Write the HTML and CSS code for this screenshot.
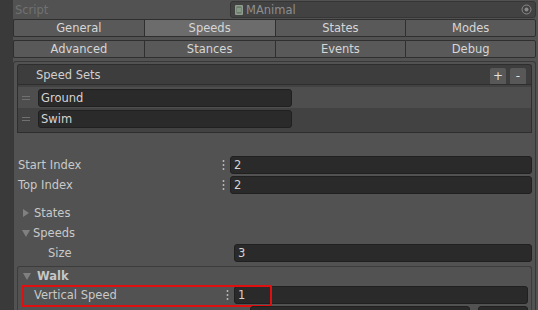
FILE: index.html
```html
<!DOCTYPE html>
<html>
<head>
<meta charset="utf-8">
<link rel="stylesheet" href="styles.css">
</head>
<body>
<div class="gutter"></div>
<div class="main">
  <div class="script-row">
    <span class="script-label">Script</span>
    <div class="objfield">
      <svg class="scripticon" width="8" height="10" viewBox="0 0 8 10"><rect x="0" y="0" width="8" height="10" rx="1" fill="#8f9c8f"/><rect x="1.5" y="1.5" width="5" height="7" fill="#5d6f5d"/><path d="M3 2.5v5M5 2.5v5M2 4h4M2 6h4" stroke="#9fb09f" stroke-width="0.8"/></svg>
      <span class="objname">MAnimal</span>
      <svg class="target" width="11" height="11" viewBox="0 0 11 11"><circle cx="5.5" cy="5.5" r="4.5" fill="none" stroke="#8a8a8a" stroke-width="1"/><circle cx="5.5" cy="5.5" r="2" fill="#8a8a8a"/></svg>
    </div>
  </div>
  <div class="tabs">
    <div class="tab">General</div>
    <div class="tab selected">Speeds</div>
    <div class="tab">States</div>
    <div class="tab">Modes</div>
  </div>
  <div class="tabs second">
    <div class="tab">Advanced</div>
    <div class="tab">Stances</div>
    <div class="tab">Events</div>
    <div class="tab">Debug</div>
  </div>
  <div class="box">
    <div class="list-header">
      <span class="list-title">Speed Sets</span>
      <div class="list-btns">
        <div class="lbtn">+</div>
        <div class="lbtn">-</div>
      </div>
    </div>
    <div class="list-body">
      <div class="list-item active">
        <span class="handle"></span>
        <div class="field name">Ground</div>
      </div>
      <div class="list-item">
        <span class="handle"></span>
        <div class="field name">Swim</div>
      </div>
    </div>

    <div class="prop first">
      <span class="plabel">Start Index</span>
      <span class="dots"></span>
      <div class="field wide">2</div>
    </div>
    <div class="prop">
      <span class="plabel">Top Index</span>
      <span class="dots"></span>
      <div class="field wide">2</div>
    </div>

    <div class="fold states"><span class="tri right"></span><span>States</span></div>
    <div class="fold"><span class="tri down"></span><span>Speeds</span></div>
    <div class="prop size">
      <span class="plabel">Size</span>
      <div class="field wide">3</div>
    </div>

    <div class="walk">
      <div class="walk-head"><span class="tri down"></span><span class="bold">Walk</span></div>
      <div class="prop vs">
        <span class="plabel">Vertical Speed</span>
        <span class="dots"></span>
        <div class="field wide">1</div>
        <div class="highlight"></div>
      </div>
      <div class="prop vs next">
        <span class="plabel"></span>
        <span class="dots"></span>
        <div class="field part"></div>
        <span class="dots"></span>
        <div class="field small"></div>
      </div>
    </div>
  </div>
</div>
</body>
</html>
```

FILE: styles.css
```css
* { box-sizing: border-box; }
html, body { margin: 0; padding: 0; }
body {
  width: 538px;
  height: 310px;
  overflow: hidden;
  background: #525252;
  font-family: "DejaVu Sans", sans-serif;
  font-size: 11.5px;
  color: #c9c9c9;
  display: flex;
}
.gutter {
  width: 13px;
  flex: none;
  background: #3a3a3a;
}
.main {
  width: 523px;
  flex: none;
}
.script-row {
  height: 19px;
  display: flex;
  align-items: center;
}
.script-label {
  padding-left: 2px;
  color: #717171;
}
.objfield {
  margin-left: auto;
  width: 306px;
  height: 17px;
  align-self: flex-start;
  margin-top: 1px;
  background: #424242;
  border: 1px solid #363636;
  border-radius: 3px;
  display: flex;
  align-items: center;
  padding-left: 4px;
  padding-right: 3px;
}
.scripticon { flex: none; }
.objname {
  margin-left: 3px;
  color: #8e8e8e;
}
.target { margin-left: auto; }
.tabs {
  display: grid;
  grid-template-columns: repeat(4, 1fr);
  height: 18px;
}
.tabs.second { margin-top: 3px; }
.tab {
  background: #595959;
  border: 1px solid #2f2f2f;
  border-right: none;
  color: #d6d6d6;
  display: flex;
  align-items: center;
  justify-content: center;
}
.tab:first-child { border-radius: 2px 0 0 2px; }
.tab:last-child { border-right: 1px solid #2f2f2f; border-radius: 0 2px 2px 0; }
.tab.selected { background: #6c6c6c; }
.box {
  margin-top: 3px;
  border: 1px solid #383838;
  border-bottom: none;
  border-radius: 3px 3px 0 0;
  padding: 2px 3px 0 3px;
  height: 249px;
  overflow: hidden;
}
.list-header {
  height: 20px;
  background: #3d3d3d;
  border: 1px solid #2e2e2e;
  border-bottom: none;
  border-radius: 3px 3px 0 0;
  display: flex;
  align-items: center;
  padding-left: 18px;
}
.list-title { color: #cfcfcf; }
.list-btns {
  margin-left: auto;
  display: flex;
  gap: 4px;
  align-self: flex-end;
  margin-right: 5px;
}
.lbtn {
  width: 16px;
  height: 16px;
  background: #585858;
  border-radius: 2px 2px 0 0;
  color: #e2e2e2;
  display: flex;
  align-items: center;
  justify-content: center;
  font-size: 12px;
}
.list-body {
  height: 49px;
  background: #424242;
  border: 1px solid #2e2e2e;
  padding-top: 2px;
}
.list-item {
  height: 21px;
  display: flex;
  align-items: center;
}
.list-item.active { background: #4e4e4e; }
.handle {
  width: 8px;
  height: 4px;
  margin-left: 4px;
  margin-right: 8px;
  border-top: 1px solid #707070;
  border-bottom: 1px solid #707070;
}
.field {
  height: 18px;
  background: #2a2a2a;
  border: 1px solid #202020;
  border-radius: 3px;
  color: #d4d4d4;
  display: flex;
  align-items: center;
  padding-left: 3px;
}
.field.name { width: 254px; padding-left: 2px; }
.prop {
  height: 18px;
  display: flex;
  align-items: center;
  margin-top: 2px;
}
.prop.first { margin-top: 23px; }
.plabel {
  padding-left: 1px;
  width: 205px;
  flex: none;
}
.dots {
  width: 3px;
  height: 12px;
  flex: none;
  margin-right: 5px;
  background: radial-gradient(circle, #b4b4b4 0.9px, transparent 1.2px) 0 0 / 3px 4px repeat-y;
}
.field.wide { flex: 1; }
.fold {
  height: 18px;
  display: flex;
  align-items: center;
  margin-top: 2px;
  padding-left: 5px;
}
.fold.states { margin-top: 10px; }
.tri {
  width: 0;
  height: 0;
  margin-right: 5px;
}
.tri.right {
  border-top: 4px solid transparent;
  border-bottom: 4px solid transparent;
  border-left: 6px solid #808080;
  margin-left: 1px;
}
.tri.down {
  border-left: 4px solid transparent;
  border-right: 4px solid transparent;
  border-top: 7px solid #808080;
  margin-right: 3px;
}
.prop.size .plabel { padding-left: 31px; width: 217px; }
.walk {
  margin-top: 4px;
  border: 1px solid #3c3c3c;
  border-bottom: none;
  border-radius: 3px 3px 0 0;
  padding: 0 3px 0 0;
  height: 60px;
}
.walk-head {
  height: 18px;
  display: flex;
  align-items: center;
  padding-left: 5px;
}
.walk-head .tri { margin-right: 6px; }
.bold { font-weight: bold; color: #c6c6c6; }
.prop.vs { position: relative; margin-top: 1px; }
.prop.vs .plabel { padding-left: 16px; width: 208px; }
.prop.vs.next { margin-top: 2px; }
.field.part { width: 220px; flex: none; }
.prop.vs.next .dots:nth-of-type(2) { margin-left: 15px; margin-right: 6px; }
.field.small { flex: 1; }
.highlight {
  position: absolute;
  left: 4px;
  top: -1px;
  width: 250px;
  height: 22px;
  border: 2px solid #e01010;
  pointer-events: none;
}
```
